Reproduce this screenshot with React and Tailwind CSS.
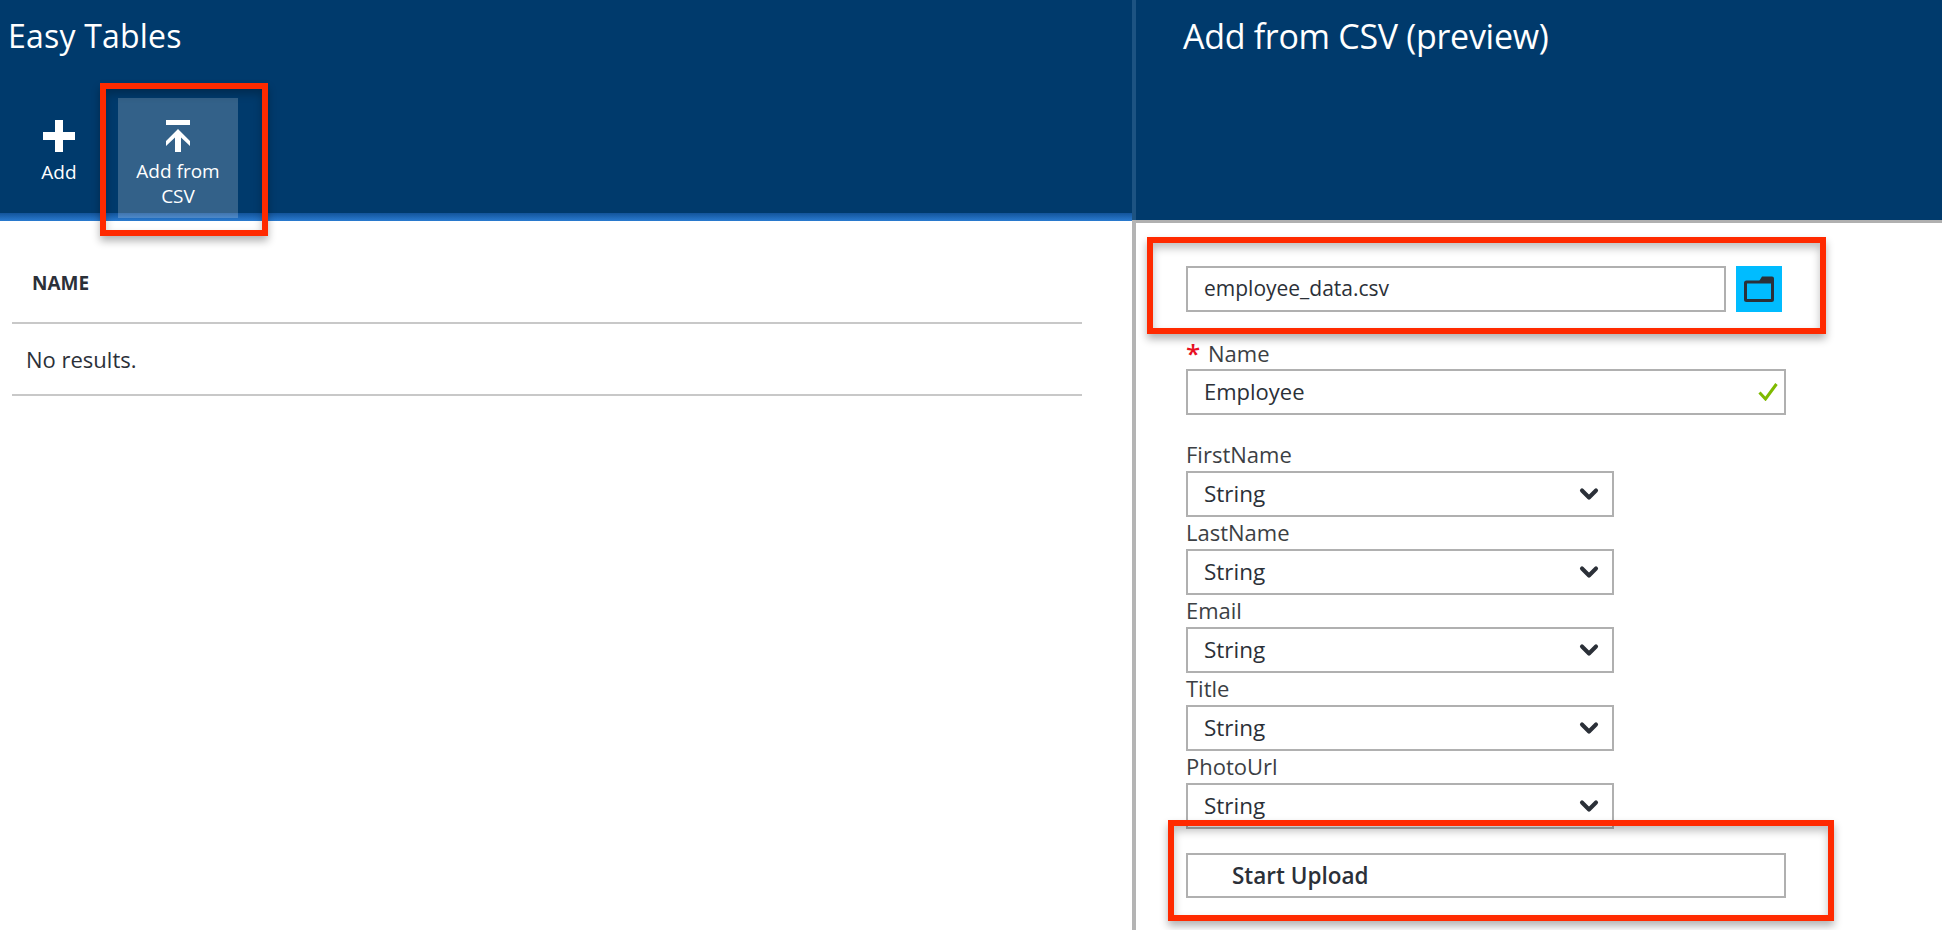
import React from "react";
import { ChevronDown } from "lucide-react";

const fields = ["FirstName", "LastName", "Email", "Title", "PhotoUrl"];

const RedBox = ({ className }) => (
  <div className={`absolute border-[6px] border-[#ff2a00] shadow-[0_5px_8px_rgba(0,0,0,0.3),inset_0_5px_8px_rgba(0,0,0,0.25)] pointer-events-none ${className}`} />
);

const PlusIcon = () => (
  <svg width="32" height="32" viewBox="0 0 32 32" fill="white">
    <path d="M12 0h8v12h12v8H20v12h-8V20H0v-8h12z" />
  </svg>
);

const UploadIcon = () => (
  <svg width="24" height="32" viewBox="0 0 24 32" fill="white">
    <path d="M0 0h24v5H0z" />
    <path d="M12 9l12 12v5l-9-8.500V32H9V17.500L0 26v-5z" />
  </svg>
);

const FolderIcon = () => (
  <svg width="30" height="26" viewBox="0 0 30 26" fill="none">
    <rect x="1.500" y="6" width="27" height="18.500" rx="1" stroke="#2b3038" strokeWidth="3" />
    <path d="M14 7l4-6.500a1 1 0 0 1 .5 0H28a2 2 0 0 1 2 2V7z" fill="#2b3038" />
  </svg>
);

const CheckMark = () => (
  <svg width="20" height="18" viewBox="0 0 20 18" fill="none">
    <path d="M1.500 9.500L7.500 16L18.500 1" stroke="#7fba00" strokeWidth="3" />
  </svg>
);

const SelectField = ({ label }) => (
  <div className="h-[78px]">
    <div className="h-[32px] pt-[1px] text-[22px] leading-[28px] text-[#3c3f44]">{label}</div>
    <div className="w-[428px] h-[46px] border-2 border-[#b0b0b0] bg-white flex items-center justify-between pl-[16px] pr-[9px] pb-[1px] text-[22.500px] text-[#2b3038]">
      <span>String</span>
      <ChevronDown size={28} strokeWidth={3.5} className="text-[#2b3038]" />
    </div>
  </div>
);

export default function App() {
  return (
    <div className="relative flex w-[1942px] h-[930px] overflow-hidden bg-white font-['Open_Sans','Noto_Sans',sans-serif]">
      <div className="w-[1132px] shrink-0">
        <div className="relative h-[221px] bg-[#003a6c]">
          <h1 className="h-[98px] pl-[8px] pt-[14px] text-[32px] leading-[44px] tracking-[0.2px] text-white">Easy Tables</h1>
          <div className="absolute left-0 right-0 top-[213px] h-[8px] bg-gradient-to-b from-[#12549b] to-[#2a7bd0]" />
          <div className="relative flex">
            <div className="w-[118px] flex flex-col items-center pt-[22px]">
              <PlusIcon />
              <span className="mt-[7px] text-[19px] leading-[26px] font-medium text-white">Add</span>
            </div>
            <div className="w-[120px] h-[120px] bg-white/20 flex flex-col items-center pt-[22px]">
              <UploadIcon />
              <span className="mt-[7px] text-[19px] leading-[25px] font-medium text-white text-center whitespace-nowrap">Add from<br />CSV</span>
            </div>
          </div>
        </div>
        <div className="pl-[12px] pr-[50px]">
          <div className="h-[103px] border-b-2 border-[#c8c8c8] flex items-end pl-[20px] pb-[25px] text-[19px] font-bold text-[#2b3038]">NAME</div>
          <div className="h-[72px] border-b-2 border-[#c8c8c8] flex items-center pl-[14px] pt-[1px] text-[22px] text-[#2b3038]">No results.</div>
        </div>
      </div>

      <div className="w-[4px] shrink-0 flex flex-col">
        <div className="h-[220px] bg-[#1d5382]" />
        <div className="flex-1 bg-[#b4b4b4]" />
      </div>

      <div className="flex-1">
        <div className="h-[223px] bg-[#003a6c] border-b-[3px] border-[#b0b0b0] pl-[47px] pt-[14px]">
          <h1 className="text-[34px] leading-[44px] tracking-[-0.3px] text-white">Add from CSV (preview)</h1>
        </div>
        <div className="pl-[50px] pt-[43px]">
          <div className="flex gap-[10px]">
            <div className="w-[540px] h-[46px] border-2 border-[#b0b0b0] flex items-center pl-[16px] text-[21px] text-[#2b3038]">employee_data.csv</div>
            <div className="w-[46px] h-[46px] bg-[#00bcff] flex items-center justify-center">
              <FolderIcon />
            </div>
          </div>
          <div className="h-[57px] flex items-end pb-[2px] text-[22px] leading-[28px] text-[#3c3f44]">
            <span className="w-[22px] text-[#e81123] text-[26px] font-semibold">*</span>
            <span>Name</span>
          </div>
          <div className="w-[600px] h-[46px] border-2 border-[#b0b0b0] flex items-center justify-between pl-[16px] pr-[6px] pb-[1px] text-[22px] text-[#2b3038]">
            <span>Employee</span>
            <CheckMark />
          </div>
          <div className="mt-[24px]">
            {fields.map((f) => (
              <SelectField key={f} label={f} />
            ))}
          </div>
          <div className="mt-[24px] w-[600px] h-[45px] border-2 border-[#b0b0b0] flex items-center pl-[44px] text-[22.500px] font-semibold text-[#2b3038]">Start Upload</div>
        </div>
      </div>

      <RedBox className="left-[100px] top-[83px] w-[168px] h-[153px]" />
      <RedBox className="left-[1147px] top-[237px] w-[679px] h-[97px]" />
      <RedBox className="left-[1168px] top-[820px] w-[666px] h-[101px]" />
    </div>
  );
}
